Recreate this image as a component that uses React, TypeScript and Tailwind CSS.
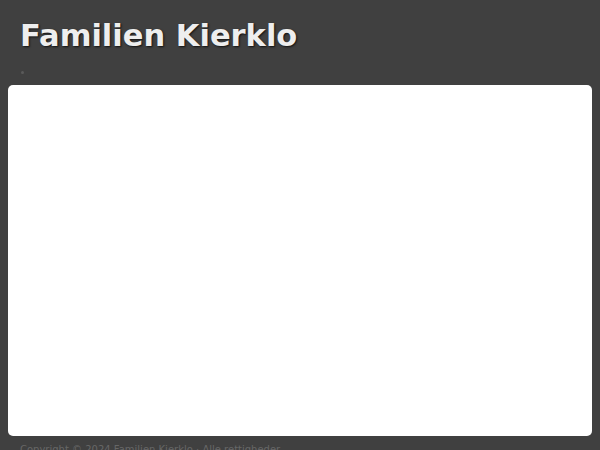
export default function App() {
  return (
    <div
      className="flex h-[450px] w-[600px] flex-col overflow-hidden bg-[#404040]"
      style={{ fontFamily: '"DejaVu Sans", sans-serif' }}
    >
      <header className="shrink-0 px-5 pt-[17px]">
        <h1 className="text-[30.5px] font-bold leading-[38px] text-[#eeeeee] [text-shadow:1px_1px_2px_#111]">
          Familien Kierklo
        </h1>
        <div className="mt-[16px] ml-px h-[3px] w-[3px] rounded-full bg-[#5a5a5a]" />
      </header>
      <main className="mx-2 mt-[11px] h-[351px] shrink-0 rounded-[5px] bg-white" />
      <footer className="shrink-0 px-5 pt-[8px] text-[10px] leading-[12px] text-[#666]">
        Copyright © 2024 Familien Kierklo · Alle rettigheder
      </footer>
    </div>
  );
}
